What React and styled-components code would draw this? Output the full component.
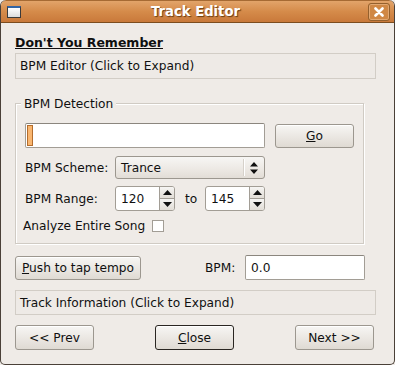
import styled, { createGlobalStyle } from "styled-components";

const GlobalStyle = createGlobalStyle`
  html, body {
    margin: 0;
    padding: 0;
    background: #efebe7;
  }
  body {
    font-family: "DejaVu Sans", "Liberation Sans", sans-serif;
    font-size: 12.2px;
    color: #101010;
  }
`;

const Window = styled.div`
  width: 395px;
  height: 365px;
  box-sizing: border-box;
  border: 1px solid #4a4038;
  border-top: none;
  border-radius: 6px 6px 5px 5px;
  background: #efebe7;
  display: flex;
  flex-direction: column;
  overflow: hidden;
`;

const TitleBar = styled.div`
  height: 23px;
  box-sizing: border-box;
  border-bottom: 1px solid #7c4d1f;
  border-top: 1px solid #a66a33;
  background: linear-gradient(#e2a46a, #d58b4a 50%, #c9793a);
  display: flex;
  align-items: center;
  padding: 0 5px 0 7px;
  margin: 0 -1px;
  border-radius: 6px 6px 0 0;
`;

const WinIcon = styled.div`
  width: 12px;
  height: 9px;
  border: 1px solid #3a3a3a;
  border-top: 2px solid #3465a4;
  background: linear-gradient(#ffffff, #dcdcdc);
`;

const Title = styled.div`
  flex: 1;
  text-align: center;
  color: #ffffff;
  font-weight: bold;
  font-size: 13.2px;
  text-shadow: 1px 1px 1px #6a3d14;
  padding-left: 2px;
`;

const CloseBtn = styled.div`
  width: 20px;
  height: 16px;
  border: 1px solid #94602d;
  box-shadow: inset 0 0 0 1px #e2a872;
  border-radius: 3px;
  display: flex;
  align-items: center;
  justify-content: center;
  background: #d08845;
`;

const Body = styled.div`
  flex: 1;
  display: flex;
  flex-direction: column;
  padding: 12px 0 0 14px;
`;

const Heading = styled.div`
  font-weight: bold;
  font-size: 12.5px;
  text-decoration: underline;
  line-height: 16px;
  height: 16px;
`;

const Expander = styled.div`
  width: 361px;
  height: ${(p) => p.$h}px;
  box-sizing: border-box;
  margin-top: ${(p) => p.$mt}px;
  border: 1px solid #d2cdc6;
  background: #eeeae6;
  display: flex;
  align-items: center;
  padding-left: 4px;
`;

const Frame = styled.div`
  position: relative;
  margin-top: 24px;
  width: 349px;
  height: 141px;
  box-sizing: border-box;
  border: 1px solid #d0cbc4;
  box-shadow: inset 1px 1px 0 #ffffff, 1px 1px 0 #ffffff;
  padding: 19px 0 0 9px;
  display: flex;
  flex-direction: column;
`;

const Legend = styled.div`
  position: absolute;
  top: -8px;
  left: 5px;
  padding: 0 3px;
  background: #efebe7;
  line-height: 16px;
`;

const Row = styled.div`
  display: flex;
  align-items: center;
  height: ${(p) => p.$h}px;
  margin-top: ${(p) => p.$mt || 0}px;
  margin-left: ${(p) => p.$ml || 0}px;
`;

const Label = styled.div`
  width: ${(p) => (p.$w ? `${p.$w}px` : "auto")};
  margin-left: ${(p) => p.$ml || 0}px;
`;

const Entry = styled.div`
  width: ${(p) => p.$w}px;
  height: ${(p) => p.$h}px;
  box-sizing: border-box;
  border: 1px solid #a29d95;
  border-top-color: #8b867e;
  border-radius: 2px;
  background: #ffffff;
  display: flex;
  align-items: center;
  padding-left: ${(p) => p.$pl ?? 5}px;
`;

const Progress = styled.div`
  width: 6px;
  height: 21px;
  box-sizing: border-box;
  border: 1px solid #b46d2d;
  background: #f9b670;
`;

const Button = styled.div`
  width: ${(p) => p.$w}px;
  height: ${(p) => p.$h || 25}px;
  box-sizing: border-box;
  margin-left: ${(p) => p.$ml || 0}px;
  border: 1px solid ${(p) => (p.$focus ? "#2a2622" : "#9c978f")};
  border-radius: 3px;
  background: linear-gradient(#f7f6f4, #e9e5e0 60%, #dfdad3);
  box-shadow: inset 0 1px 0 #ffffff;
  display: flex;
  align-items: center;
  justify-content: center;
`;

const Combo = styled.div`
  width: 150px;
  height: 23px;
  box-sizing: border-box;
  border: 1px solid #9c978f;
  border-radius: 3px;
  background: linear-gradient(#f7f6f4, #ece8e3 60%, #e2ddd6);
  display: flex;
  align-items: center;
`;

const ComboText = styled.div`
  flex: 1;
  padding-left: 5px;
`;

const ComboSep = styled.div`
  width: 1px;
  height: 17px;
  background: #d6d1ca;
  box-shadow: 1px 0 0 #ffffff;
`;

const ComboArrows = styled.div`
  width: 20px;
  display: flex;
  justify-content: center;
`;

const Spin = styled.div`
  width: 60px;
  height: 25px;
  box-sizing: border-box;
  border: 1px solid #a29d95;
  border-radius: 3px;
  background: #ffffff;
  display: flex;
  overflow: hidden;
`;

const SpinValue = styled.div`
  flex: 1;
  display: flex;
  align-items: center;
  padding-left: 5px;
`;

const SpinButtons = styled.div`
  width: 14px;
  display: flex;
  flex-direction: column;
  border-left: 1px solid #a29d95;
`;

const SpinBtn = styled.div`
  flex: 1;
  display: flex;
  align-items: center;
  justify-content: center;
  background: linear-gradient(#f6f5f3, #e2ddd6);
  border-top: ${(p) => (p.$lower ? "1px solid #a29d95" : "none")};
`;

const Check = styled.div`
  width: 12px;
  height: 12px;
  box-sizing: border-box;
  border: 1px solid #a29d95;
  background: #ffffff;
  margin-left: 7px;
`;

const ButtonBar = styled.div`
  display: flex;
  gap: 61px;
  margin-top: 10px;
`;

const Up = () => (
  <svg width="9" height="5" viewBox="0 0 9 5">
    <path d="M4.5 0L9 5H0z" fill="#111" />
  </svg>
);

const Down = () => (
  <svg width="9" height="5" viewBox="0 0 9 5">
    <path d="M0 0H9L4.5 5z" fill="#111" />
  </svg>
);

const SpinBox = ({ value }) => (
  <Spin>
    <SpinValue>{value}</SpinValue>
    <SpinButtons>
      <SpinBtn>
        <Up />
      </SpinBtn>
      <SpinBtn $lower>
        <Down />
      </SpinBtn>
    </SpinButtons>
  </Spin>
);

const App = () => (
  <>
    <GlobalStyle />
    <Window>
      <TitleBar>
        <WinIcon />
        <Title>Track Editor</Title>
        <CloseBtn>
          <svg width="10" height="10" viewBox="0 0 10 10">
            <path
              d="M1.5 1.5L8.5 8.5M8.5 1.5L1.5 8.5"
              stroke="#ffffff"
              strokeWidth="2.6"
              strokeLinecap="round"
            />
          </svg>
        </CloseBtn>
      </TitleBar>
      <Body>
        <Heading>Don't You Remember</Heading>
        <Expander $h={26} $mt={2}>
          BPM Editor (Click to Expand)
        </Expander>
        <Frame>
          <Legend>BPM Detection</Legend>
          <Row $h={25}>
            <Entry $w={240} $h={25} $pl={1}>
              <Progress />
            </Entry>
            <Button $w={79} $h={24} $ml={10}>
              <span>
                <u>G</u>o
              </span>
            </Button>
          </Row>
          <Row $h={23} $mt={8}>
            <Label $w={90}>BPM Scheme:</Label>
            <Combo>
              <ComboText>Trance</ComboText>
              <ComboSep />
              <ComboArrows>
                <svg width="8" height="12" viewBox="0 0 8 12">
                  <path d="M4 0L8 4.5H0zM0 7.5H8L4 12z" fill="#111" />
                </svg>
              </ComboArrows>
            </Combo>
          </Row>
          <Row $h={25} $mt={7}>
            <Label $w={90}>BPM Range:</Label>
            <SpinBox value="120" />
            <Label $ml={10} $w={20}>
              to
            </Label>
            <SpinBox value="145" />
          </Row>
          <Row $h={14} $mt={8} $ml={-2}>
            <Label>Analyze Entire Song</Label>
            <Check />
          </Row>
        </Frame>
        <Row $h={25} $mt={11}>
          <Button $w={126} $h={24}>
            <span>
              <u>P</u>ush to tap tempo
            </span>
          </Button>
          <Label $ml={64} $w={40}>
            BPM:
          </Label>
          <Entry $w={120} $h={25}>
            0.0
          </Entry>
        </Row>
        <Expander $h={25} $mt={10}>
          Track Information (Click to Expand)
        </Expander>
        <ButtonBar>
          <Button $w={79}>&lt;&lt; Prev</Button>
          <Button $w={79} $focus>
            <span>
              <u>C</u>lose
            </span>
          </Button>
          <Button $w={79}>Next &gt;&gt;</Button>
        </ButtonBar>
      </Body>
    </Window>
  </>
);

export default App;
